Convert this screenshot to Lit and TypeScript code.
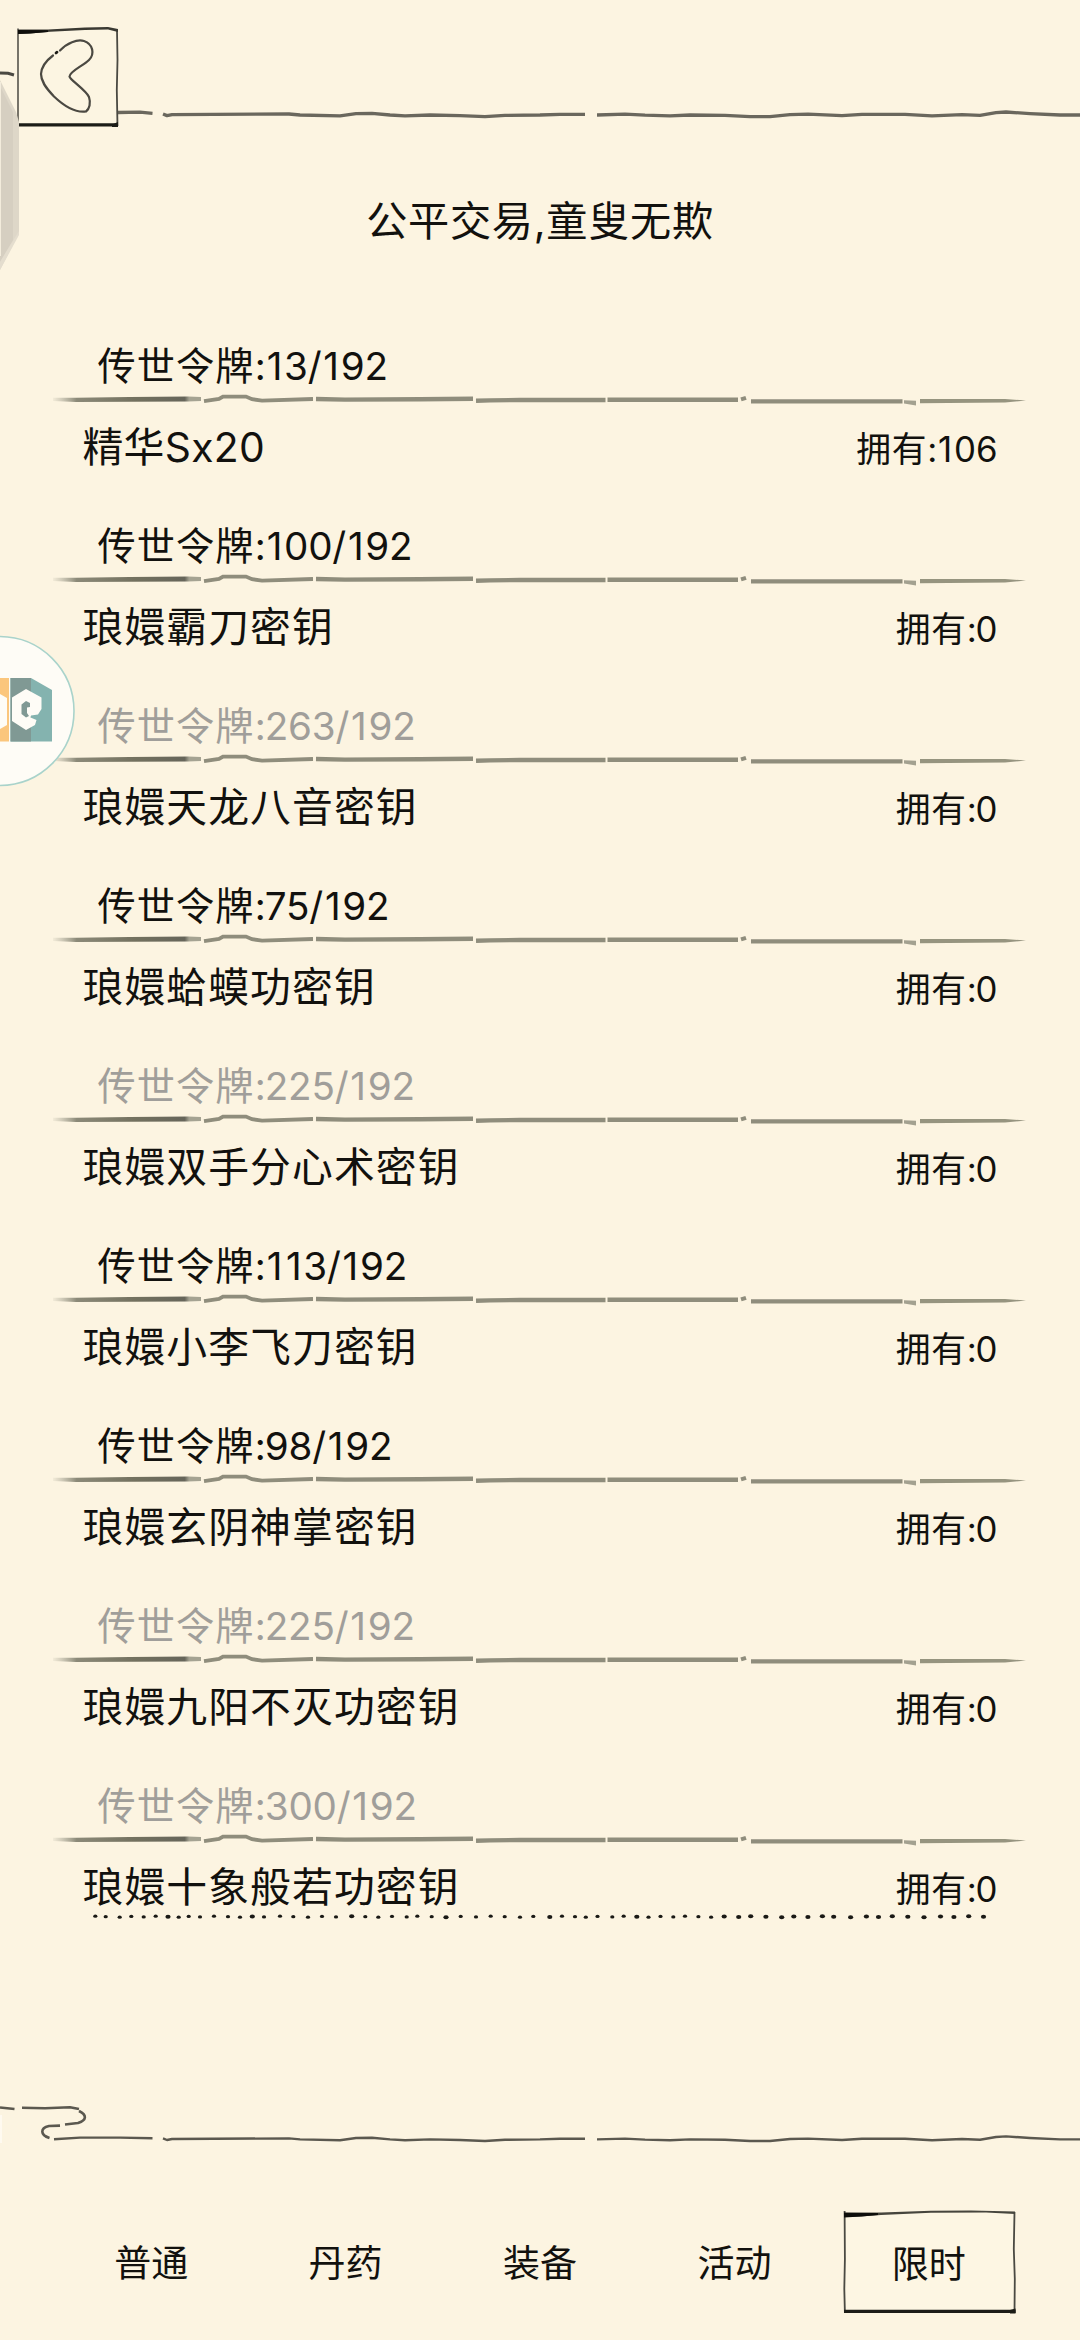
import { LitElement, html, svg, css } from "lit";
import { customElement, property } from "lit/decorators.js";

interface Offer {
  name: string;
  cost: number;
  owned: number;
}

const BUDGET = 192;

const OFFERS: Offer[] = [
  { name: "精华Sx20", cost: 13, owned: 106 },
  { name: "琅嬛霸刀密钥", cost: 100, owned: 0 },
  { name: "琅嬛天龙八音密钥", cost: 263, owned: 0 },
  { name: "琅嬛蛤蟆功密钥", cost: 75, owned: 0 },
  { name: "琅嬛双手分心术密钥", cost: 225, owned: 0 },
  { name: "琅嬛小李飞刀密钥", cost: 113, owned: 0 },
  { name: "琅嬛玄阴神掌密钥", cost: 98, owned: 0 },
  { name: "琅嬛九阳不灭功密钥", cost: 225, owned: 0 },
  { name: "琅嬛十象般若功密钥", cost: 300, owned: 0 },
];

const TABS = ["普通", "丹药", "装备", "活动", "限时"];

// Long wavering ink line shared by the header and the footer.
const inkLine = svg`
  <path d="M163 114l4 1.6L172 114.6L289 114L300 115L340 115.8L356 113.6L372 113.4L390 115L405 115.8L430 115L460 115.6L485 116.6L505 115.4L540 115L560 114.3L585 114.3"/>
  <path d="M597 115L625 114.2L645 115.2L670 115.8L690 115L725 115.3L750 116.6L770 116.6L790 114.6L808 114.2L842 115.6L862 114.3L905 114.3L932 115.8L962 114.6L980 115.4L996 112.6L1006 112L1030 113.6L1060 115L1080 115"/>`;

// Digits run slightly tight, with extra room on both sides of every "1".
const figures = (text: string) =>
  html`<span class="num">${[...text].map((c) => (c === "1" ? html`<span class="one">1</span>` : c))}</span>`;

@customElement("ink-divider")
export class InkDivider extends LitElement {
  static styles = css`
    :host {
      display: block;
      height: 14px;
    }
    svg {
      display: block;
    }
  `;

  render() {
    return html`<svg width="1080" height="14" viewBox="0 0 1080 14" fill="none" stroke="#8f8d7c" stroke-width="4.4">
      <defs>
        <linearGradient id="head" gradientUnits="userSpaceOnUse" x1="53" y1="0" x2="201" y2="0">
          <stop offset="0" stop-color="#a09e8d" stop-opacity=".1" />
          <stop offset=".16" stop-color="#8b8978" />
          <stop offset=".55" stop-color="#73715f" />
          <stop offset=".89" stop-color="#66655a" />
          <stop offset=".92" stop-color="#a5a392" />
          <stop offset="1" stop-color="#a5a392" />
        </linearGradient>
      </defs>
      <path d="M53 4.8L76 4.8L130 4L188 3.600L201 4V8L188 8.400L76 9L53 8Z" fill="url(#head)" stroke="none" />
      <path d="M204 8.200L219 6L223 3.600H246L252 6.200L262 7.600L313 6" stroke-width="3.800" />
      <path d="M316 6L345 6.600L420 6.200L473 5.800" />
      <path d="M476 7.800L490 7.400L520 7H605.500" />
      <path d="M607.500 6.800H738" />
      <path d="M741 6.400l5 -1.600" stroke-width="4" />
      <path d="M751 8.400H902.500" />
      <path d="M904 7.200L916 7.800V12.600L904 10.600Z" fill="#a3a190" stroke="none" />
      <path d="M920 5.900L1005 6L1026 7.600L1005 9.400L920 10.300Z" fill="#96947f" stroke="none" />
    </svg>`;
  }
}

@customElement("offer-row")
export class OfferRow extends LitElement {
  @property({ attribute: false }) offer!: Offer;

  static styles = css`
    :host {
      display: block;
      height: 180px;
      flex: none;
    }
    .cost {
      box-sizing: border-box;
      height: 58px;
      padding: 2px 0 0 97.5px;
      font-size: 38.2px;
      letter-spacing: 1.1px;
      line-height: 58px;
      color: #12110e;
    }
    .num {
      letter-spacing: 0;
    }
    .cost .num {
      margin-left: -2px;
      font-size: 38.6px;
      letter-spacing: -0.2px;
    }
    .one {
      padding: 0 1.9px;
    }
    .cost.short {
      color: #a09e9a;
    }
    .line {
      display: flex;
      justify-content: space-between;
      padding: 10px 82.5px 0 82.5px;
      line-height: 60px;
      color: #12110e;
    }
    .name {
      font-size: 40.8px;
      letter-spacing: 1.1px;
    }
    .name.latin {
      letter-spacing: 0.3px;
    }
    .owned {
      font-size: 34.8px;
      letter-spacing: 0.7px;
      padding-top: 2px;
    }
    .owned .num {
      margin-left: -2px;
    }
  `;

  render() {
    const { name, cost, owned } = this.offer;
    return html`
      <div class="cost ${cost > BUDGET ? "short" : ""}">传世令牌:${figures(`${cost}/${BUDGET}`)}</div>
      <ink-divider></ink-divider>
      <div class="line">
        <span class="name ${/\w/.test(name) ? "latin" : ""}">${name}</span>
        <span class="owned">拥有:${figures(String(owned))}</span>
      </div>
    `;
  }
}

@customElement("app-root")
export class AppRoot extends LitElement {
  static styles = css`
    :host {
      display: flex;
      flex-direction: column;
      position: relative;
      width: 1080px;
      height: 2340px;
      overflow: hidden;
      background: #fcf4e1;
      color: #12110e;
      font-family: Inter, "Noto Sans CJK SC", sans-serif;
    }
    svg {
      display: block;
    }
    .header {
      height: 180px;
      flex: none;
    }
    .title {
      height: 155px;
      flex: none;
      text-align: center;
      font-size: 41.2px;
      letter-spacing: 0.7px;
      line-height: 82px;
      color: #12110e;
    }
    .list {
      display: flex;
      flex-direction: column;
      height: 1620px;
      flex: none;
    }
    .dots {
      height: 176px;
      margin-top: -51px;
      flex: none;
    }
    .footer {
      height: 100px;
      flex: none;
    }
    .tabs {
      display: flex;
      padding: 29px 54px 0 54px;
    }
    .tab {
      display: grid;
      place-items: center;
      flex: 1;
      height: 103px;
      font-size: 37px;
    }
    .tab span,
    .tab svg {
      grid-area: 1 / 1;
    }
    .edge {
      position: absolute;
      left: 0;
      top: 60px;
    }
    .bubble {
      position: absolute;
      left: 0;
      top: 635px;
    }
  `;

  private header() {
    return html`<svg class="header" width="1080" height="180" viewBox="0 0 1080 180" fill="none" stroke-linejoin="round">
      <g stroke="#6a675d" stroke-width="3.3">
        <path d="M118 112.500L140 112.200L152.500 113.300" />
        ${inkLine}
      </g>
      <path d="M18 31L117 29V125H18Z" fill="#fcf5e2" />
      <path d="M18 28.500V126" stroke="#55534b" stroke-width="1.6" />
      <path d="M117 30L117.500 60L116.800 90L117.500 126" stroke="#4a4942" stroke-width="1.8" />
      <path d="M18 29.500L48 29.500L85 27.500L108 27L118 29V32L108 29.600L85 30L50 31.800L30 33.500L18 34Z" fill="#3a3932" />
      <path d="M18 30L48 30.300V32L30 33.500L18 34Z" fill="#0e0e0b" />
      <path d="M17.500 124.800H118" stroke="#1c1c17" stroke-width="3.2" />
      <path d="M112 124.600L118 122V127H112Z" fill="#1c1c17" />
      <g stroke="#4b4942" stroke-width="2.2" stroke-linecap="round">
        <path d="M60 50.500C67 43 77 39 84 41C93 44 95 54 89 60C83 66 70 71 69.500 76.500C70 80 86 90 89 97C91 103 89.500 109 86 111.500C75 113 64 106 54 96.500C45 87 41 81 41 74C41.500 66 47 60 53 55.500" />
        <path d="M56 53l1 -.8" stroke="#1c1c17" stroke-width="2.8" />
      </g>
    </svg>`;
  }

  private dots() {
    const xs = [
      95.3, 105.7, 119.7, 131.3, 143.7, 155.7, 168, 178.7, 188.7, 200, 214, 228, 240, 252.3, 264, 280, 293.3, 308, 322,
      336, 351.7, 365.3, 378.3, 392, 406.7, 417.3, 431.7, 446, 460.7, 476, 490.7, 504.7, 520, 533.3, 549.8, 562, 575,
      585.8, 597.5, 612.3, 623.7, 636.8, 648.5, 660.5, 673.3, 685, 698.4, 711.1, 724.2, 738.7, 750.7, 765.9, 781.7,
      793.8, 807.9, 822.4, 833.7, 850.6, 866.4, 878.5, 892.3, 907.8, 924, 940.5, 953.9, 968.7, 983.5,
    ];
    return html`<svg class="dots" width="1080" height="176" viewBox="0 0 1080 176" fill="#1a1915">
      ${xs.map((x, i) => {
        const big = i > 48 || i % 7 === 6;
        return svg`<ellipse cx=${x} cy=${12.2 + ((i * 7) % 5) * 0.25} rx=${big ? 2.6 : 2.1} ry=${big ? 2 : 1.6} />`;
      })}
    </svg>`;
  }

  private footer() {
    return html`<svg class="footer" width="1080" height="100" viewBox="0 2080 1080 100" fill="none" stroke="#5b584f" stroke-width="2.4" stroke-linejoin="round">
      <rect x="0" y="2115" width="2" height="28" fill="#fffaf0" stroke="none" />
      <path d="M0 2107.500L14.500 2109" />
      <path d="M22 2107.800L45 2108.200L70 2107.200L79 2109" />
      <path d="M79 2111C87 2115 87 2120 78 2123L65 2124.500" stroke-width="2.600" />
      <path d="M60 2125.600L49 2126C40 2128 40 2135 49.500 2138" stroke-width="2.600" />
      <path d="M54 2139.300L80 2137.600H120L152.500 2138.200" />
      <g transform="translate(0 2024.400)">${inkLine}</g>
    </svg>`;
  }

  private frame() {
    return html`<svg width="174" height="106" viewBox="841 2210 174 106" fill="none">
      <path d="M844 2214H1013V2312H844Z" fill="#fdf6e3" />
      <path d="M843.600 2212L843.900 2260L843.300 2290L843.900 2314" stroke="#4a4942" stroke-width="1.800" />
      <path d="M1013.500 2213L1012.800 2250L1013.800 2280L1013.500 2314" stroke="#4a4942" stroke-width="1.800" />
      <path d="M843 2214L880 2213.500L930 2211.800L970 2211.400L1014 2212.500V2215L985 2213.500L930 2213.700L880 2216L860 2217.500L843 2218Z" fill="#46453d" />
      <path d="M843 2213.500L877 2214V2216L860 2217.500L843 2218.500Z" fill="#0e0e0b" />
      <path d="M843 2312.300H1014.500" stroke="#1c1c17" stroke-width="3.200" />
      <path d="M1009 2311L1014.500 2309.500V2314.500H1009Z" fill="#1c1c17" />
    </svg>`;
  }

  render() {
    return html`
      ${this.header()}
      <div class="title">公平交易,童叟无欺</div>
      <div class="list">${OFFERS.map((o) => html`<offer-row .offer=${o}></offer-row>`)}</div>
      ${this.dots()} ${this.footer()}
      <nav class="tabs">
        ${TABS.map(
          (t, i) => html`<div class="tab">${i === TABS.length - 1 ? this.frame() : ""}<span>${t}</span></div>`
        )}
      </nav>

      <svg class="edge" width="24" height="220" viewBox="0 60 24 220" fill="none">
        <path d="M0 73L8 73.200L14 75" stroke="#4b4942" stroke-width="3" />
        <path d="M0 80L16 112L19 122V233L0 270Z" fill="#ded7c8" />
        <path d="M0 86L13 112V240L0 262Z" fill="#d6cfc1" />
        <path d="M0 82V256" stroke="#f3ecdc" stroke-width="2" />
        <path d="M0 262L19 231V235L0 270Z" fill="#e4ddce" />
      </svg>

      <svg class="bubble" width="78" height="152" viewBox="0 635 78 152">
        <circle cx="-.5" cy="711" r="74.500" fill="#fefcf6" stroke="#a9d3cb" stroke-width="1.600" />
        <path d="M0 678H9V741.500H0Z" fill="#fbc67c" />
        <path d="M0 694L7 698V725L0 729Z" fill="#fefcf6" />
        <path d="M10.500 678H31L52 690V741.500H10.500Z" fill="#84b3af" />
        <path d="M10.500 678H31V741.500H10.500Z" fill="#809994" />
        <path d="M26 689L41.500 697.500V709L38 714.500L31 715.500L30.500 717.500L36.500 720L35 725L26 730L12 721V697.500Z" fill="#fefcf6" />
        <path d="M21.500 704.500L26 701L30 703V707L27 707.500V713L29 716L26 717.500L21.500 714Z" fill="#809994" />
      </svg>
    `;
  }
}
